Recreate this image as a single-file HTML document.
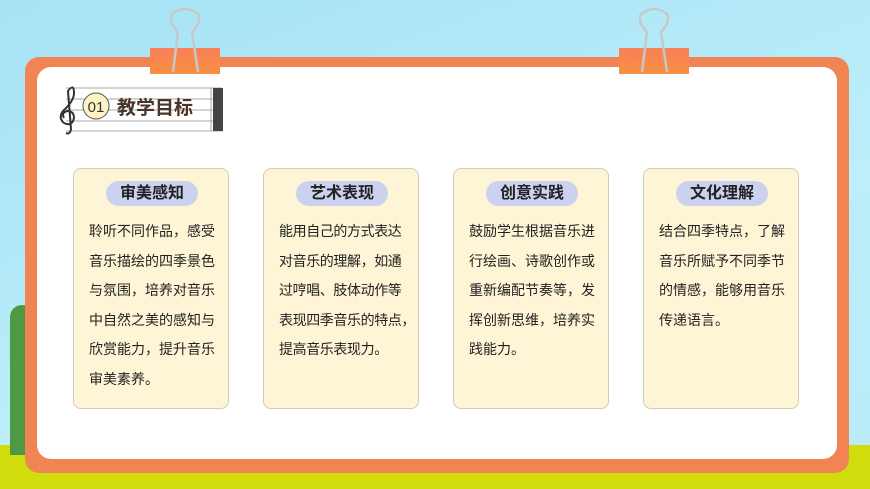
<!DOCTYPE html>
<html><head><meta charset="utf-8"><style>
body{margin:0;width:870px;height:489px;overflow:hidden;position:relative;background:linear-gradient(160deg,#a6e3f5,#bdeefa 60%,#b8ecf8);font-family:"Liberation Sans","Noto Sans CJK SC",sans-serif}
.grass{position:absolute;left:0;top:445px;width:870px;height:44px;background:#d2db0c}
.tree{position:absolute;left:10px;top:305px;width:24px;height:150px;background:#4e9a44;border-radius:12px 12px 0 0}
.board{position:absolute;left:25px;top:57px;width:824px;height:416px;background:#f08553;border-radius:14px}
.inner{position:absolute;left:37px;top:67px;width:800px;height:392px;background:#fff;border-radius:14px}
.clip{position:absolute;top:48px;width:70px;height:26px;background:linear-gradient(#f9805a,#f79040)}
.card{position:absolute;top:168px;width:156px;height:241px;background:#fef5d6;border:1px solid #d4cdb4;border-radius:8px;box-sizing:border-box}
.pill{position:absolute;left:32px;top:12px;width:92px;height:25px;background:#cbd2f0;border-radius:13px;text-align:center;font-weight:bold;font-size:16px;line-height:25px;color:#222}
.txt{position:absolute;left:15px;top:48px;width:142px;font-size:14px;line-height:29.5px;color:#222}
</style></head><body>
<div class="grass"></div><div class="tree"></div>
<div class="board"></div><div class="inner"></div>
<div class="clip" style="left:150px"></div><div class="clip" style="left:619px"></div>
<svg style="position:absolute;left:0;top:0" width="870" height="80"><g fill="none" stroke="#c8c8c8" stroke-width="2.5">
<path d="M173 72 L178 32 Q168 22 172 14 Q185 4 198 14 Q202 22 192 32 L198 72"/>
<path d="M642 72 L647 32 Q637 22 641 14 Q654 4 667 14 Q671 22 661 32 L667 72"/></g></svg>
<svg style="position:absolute;left:52px;top:85px" width="180" height="52">
<g stroke="#aaa" stroke-width="1"><line x1="14" y1="3" x2="170" y2="3"/><line x1="14" y1="14" x2="170" y2="14"/><line x1="14" y1="25" x2="170" y2="25"/><line x1="14" y1="36" x2="170" y2="36"/><line x1="14" y1="46" x2="170" y2="46"/><line x1="159" y1="3" x2="159" y2="46"/></g>
<rect x="161" y="3" width="10" height="43" fill="#444"/>
<path d="M14 48 Q18 50 19 44 L16 6 Q22 -2 22 8 Q22 16 11 26 Q6 33 12 38 Q20 42 22 33 Q22 26 15 26 Q9 28 12 33" fill="none" stroke="#333" stroke-width="2"/>
<circle cx="44" cy="21" r="13" fill="#fdf3c4" stroke="#555" stroke-width="1"/>
<text x="44" y="27" font-size="15" text-anchor="middle" fill="#333" font-family="Liberation Sans">01</text>
<text x="65" y="29" font-size="19" font-weight="bold" fill="#4a3428" font-family="Liberation Sans,Noto Sans CJK SC,sans-serif">教学目标</text>
</svg>
<div class="card" style="left:73px"><div class="pill">审美感知</div><div class="txt" style="width:130px">聆听不同作品，感受音乐描绘的四季景色与氛围，培养对音乐中自然之美的感知与欣赏能力，提升音乐审美素养。</div></div>
<div class="card" style="left:263px"><div class="pill">艺术表现</div><div class="txt" style="letter-spacing:-0.4px">能用自己的方式表达<br>对音乐的理解，如通<br>过哼唱、肢体动作等<br>表现四季音乐的特点，<br>提高音乐表现力。</div></div>
<div class="card" style="left:453px"><div class="pill">创意实践</div><div class="txt" style="width:130px">鼓励学生根据音乐进行绘画、诗歌创作或重新编配节奏等，发挥创新思维，培养实践能力。</div></div>
<div class="card" style="left:643px"><div class="pill">文化理解</div><div class="txt" style="width:130px">结合四季特点，了解音乐所赋予不同季节的情感，能够用音乐传递语言。</div></div>
</body></html>
